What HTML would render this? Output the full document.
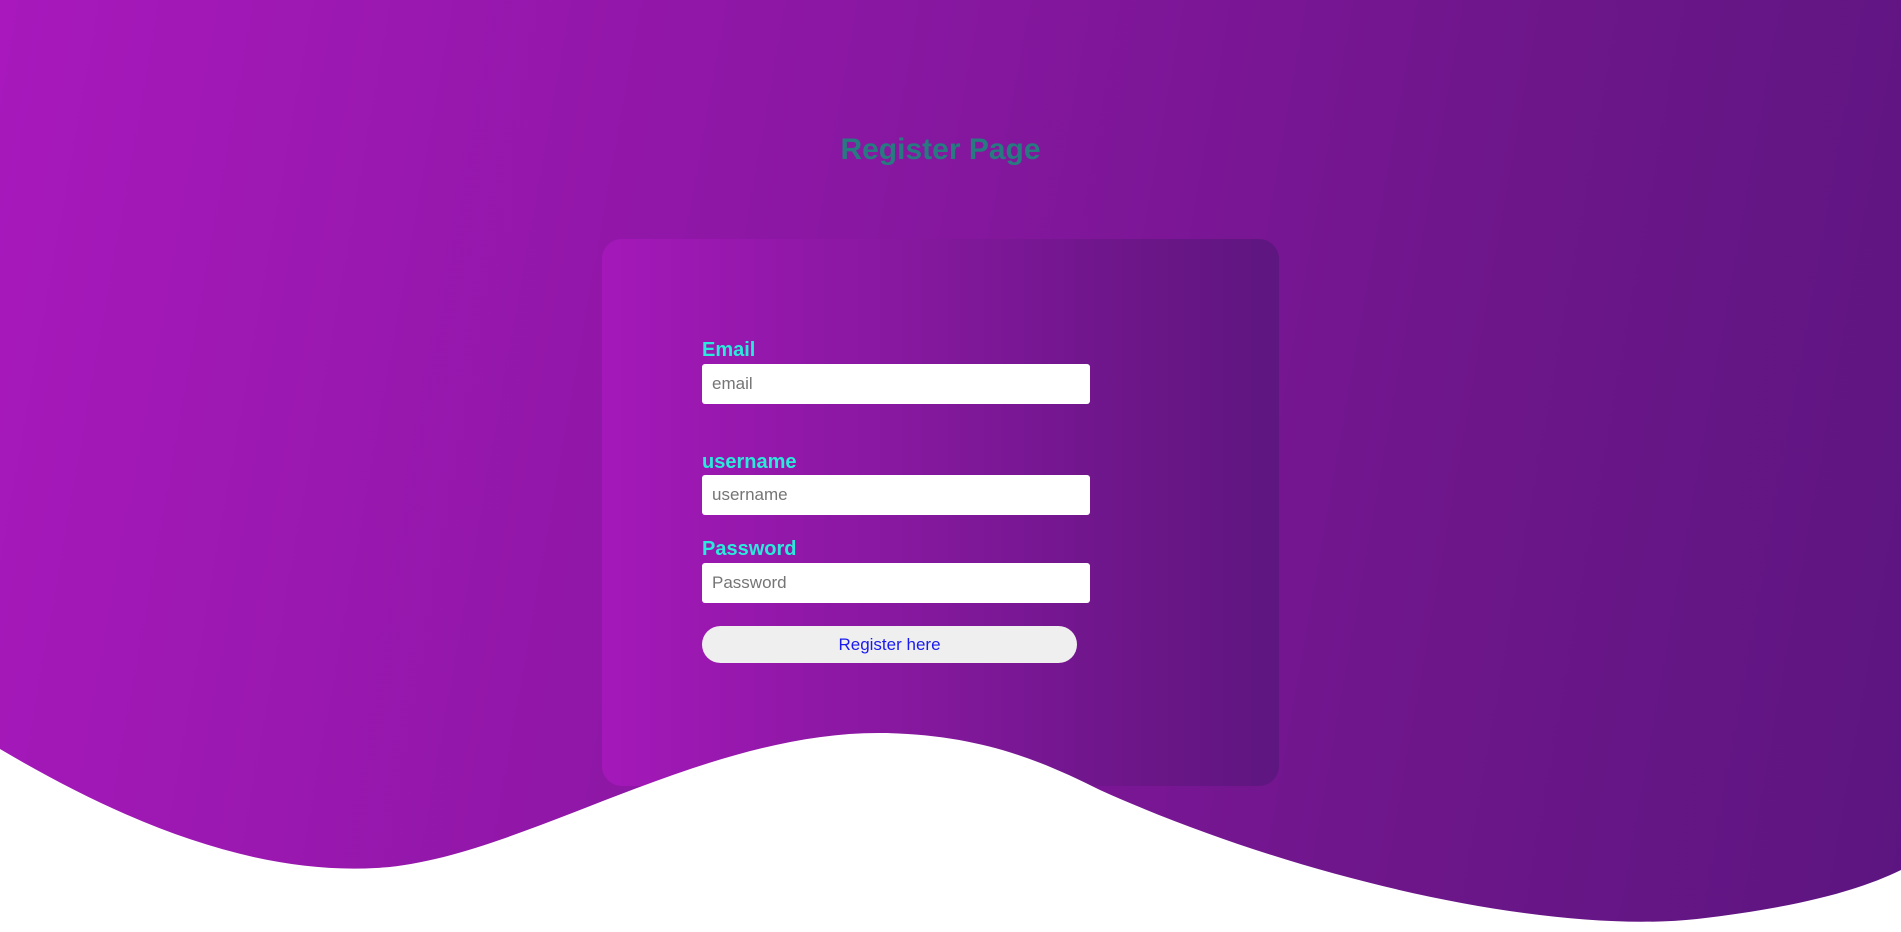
<!DOCTYPE html>
<html><head><meta charset="utf-8"><style>
html,body{margin:0;padding:0;width:1901px;height:932px;overflow:hidden;font-family:"Liberation Sans",Arial,sans-serif}
body{background:linear-gradient(100deg,#a818bc 0%,#8c17a4 40%,#6d168a 75%,#5c1580 100%);position:relative}
h1{position:absolute;left:0;width:1881px;top:133px;margin:0;text-align:center;font-size:30px;font-weight:bold;color:#267a80}
.card{position:absolute;left:602px;top:239px;width:677px;height:547px;border-radius:20px;background:linear-gradient(90deg,#a418b9 0%,#8a18a2 40%,#6b1688 80%,#5e1680 100%)}
label{position:absolute;left:100px;font-size:20px;font-weight:bold;color:#2aeadb}
.in{position:absolute;left:100px;width:388px;height:40px;background:#fff;border-radius:3px;box-sizing:border-box;padding-left:10px;line-height:40px;font-size:17px;color:#757575}
.btn{position:absolute;left:100px;top:387px;width:375px;height:37px;border-radius:19px;background:#efefef;text-align:center;line-height:37px;font-size:17px;color:#1a1aee}
svg{position:absolute;left:0;top:0}
</style></head><body>
<h1>Register Page</h1>
<div class="card">
<label style="top:100px">Email</label>
<div class="in" style="top:125px">email</div>
<label style="top:212px">username</label>
<div class="in" style="top:236px">username</div>
<label style="top:299px">Password</label>
<div class="in" style="top:324px">Password</div>
<div class="btn">Register here</div>
</div>
<svg width="1901" height="932" viewBox="0 0 1901 932"><path d="M0,749 C120,820 250,875 376,868 C520,860 700,730 885,733 C980,735 1040,760 1100,790 C1300,880 1550,935 1697,919 C1800,907 1860,890 1901,870 L1901,932 L0,932 Z" fill="#fff"/></svg>
</body></html>
